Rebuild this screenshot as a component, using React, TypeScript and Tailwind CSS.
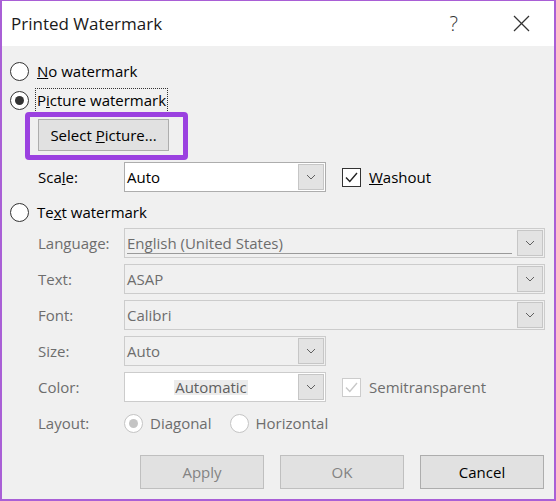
import React from "react";

// Word's "Printed Watermark" dialog, drawn as a static mock
type ComboProps = {
    width: string;
    value: string;
    disabled?: boolean;
    white?: boolean;
    centered?: boolean;
    underline?: boolean;
};

function Chevron({ color = "#606060" }: { color?: string }) {
    return (
        <svg width="10" height="6" viewBox="0 0 10 6" fill="none">
            <polyline points="1,1 5,5 9,1" stroke={color} strokeWidth="1" />
        </svg>
    );
}

function Radio({ checked = false, disabled = false }: { checked?: boolean; disabled?: boolean }) {
    return (
        <span
            className={`flex h-[19px] w-[19px] shrink-0 items-center justify-center rounded-full border bg-white ${
                disabled ? "border-[#c4c4c4]" : "border-[#333333]"
            }`}
        >
            {checked && (
                <span
                    className={`h-[9px] w-[9px] rounded-full ${disabled ? "bg-[#c4c4c4]" : "bg-[#333333]"}`}
                />
            )}
        </span>
    );
}

function Checkbox({ checked = false, disabled = false }: { checked?: boolean; disabled?: boolean }) {
    const stroke = disabled ? "#c8c8c8" : "#222222";
    return (
        <span
            className={`flex h-[19px] w-[19px] shrink-0 items-center justify-center border bg-white ${
                disabled ? "border-[#cccccc]" : "border-[#333333]"
            }`}
        >
            {checked && (
                <svg width="15" height="15" viewBox="0 0 15 15" fill="none">
                    <polyline points="2,7.5 5.8,11.5 13,3" stroke={stroke} strokeWidth="1.4" />
                </svg>
            )}
        </span>
    );
}

function Combo({ width, value, disabled, white, centered, underline }: ComboProps) {
    return (
        <div
            className={`flex h-[30px] items-stretch border ${width} ${
                white ? "bg-white" : "bg-[#f0f0f0]"
            } ${disabled ? "border-[#cccccc]" : "border-[#adadad]"}`}
        >
            <div className="relative flex flex-1 items-center">
                {centered ? (
                    <div className="flex flex-1 justify-center">
                        <span className="bg-[#ececec] px-[1px] text-[#5f5f5f]">{value}</span>
                    </div>
                ) : (
                    <span className={`pl-[2px] ${disabled ? "text-[#6d6d6d]" : "text-black"}`}>{value}</span>
                )}
                {underline && (
                    <span className="absolute bottom-[3px] left-[2px] right-[4px] h-[1px] bg-[#9a9a9a]" />
                )}
            </div>
            <div className="m-[1px] flex w-[26px] items-center justify-center border border-[#c6c6c6] bg-[#e3e3e3]">
                <Chevron />
            </div>
        </div>
    );
}

function FieldRow({ label, children }: { label: string; children: React.ReactNode }) {
    return (
        <div className="flex h-[30px] items-center pl-[36px]">
            <span className="w-[86px] text-[#6d6d6d]">{label}</span>
            {children}
        </div>
    );
}

export default function App() {
    return (
        <div className="flex h-[501px] w-[556px] flex-col border-x-2 border-b-2 border-t border-[#a95fd6] bg-[#f0f0f0] font-['Open_Sans',sans-serif] text-[15px] leading-none text-black">
            {/* title bar */}
            <div className="flex h-[45px] shrink-0 items-center bg-white pl-[9px]">
                <span className="flex-1 text-[17px] text-[#1a1a1a]">Printed Watermark</span>
                <span className="mr-[55px] text-[20px] font-light text-[#333333]">?</span>
                <svg className="mr-[24px]" width="17" height="17" viewBox="0 0 17 17">
                    <line x1="1" y1="1" x2="16" y2="16" stroke="#333333" strokeWidth="1.2" />
                    <line x1="16" y1="1" x2="1" y2="16" stroke="#333333" strokeWidth="1.2" />
                </svg>
            </div>

            <div className="flex flex-col pt-[10px]">
                <div className="flex h-[30px] items-center gap-[8px] pl-[8px]">
                    <Radio />
                    <span>
                        <u>N</u>o watermark
                    </span>
                </div>
                <div className="flex h-[28px] items-center gap-[6px] pl-[8px]">
                    <Radio checked />
                    <span className="border border-dotted border-[#333333] px-[1px] py-[4px]">
                        P<u>i</u>cture watermark
                    </span>
                </div>

                {/* highlighted picture button */}
                <div className="-mt-[2px] ml-[23px] h-[48px] w-[163px] rounded-[4px] border-[5px] border-[#9b41e0] pl-[8px] pt-[2px]">
                    <button className="flex h-[32px] w-[131px] items-center justify-center border border-[#adadad] bg-[#e1e1e1]">
                        <span>
                            Select <u>P</u>icture...
                        </span>
                    </button>
                </div>

                <div className="mt-[2px] flex h-[30px] items-center pl-[36px]">
                    <span className="w-[86px]">
                        Sca<u>l</u>e:
                    </span>
                    <Combo width="w-[202px]" value="Auto" white />
                    <div className="ml-[16px] flex items-center gap-[8px]">
                        <Checkbox checked />
                        <span>
                            <u>W</u>ashout
                        </span>
                    </div>
                </div>

                <div className="mt-[5px] flex h-[30px] items-center gap-[8px] pl-[8px]">
                    <Radio />
                    <span>
                        Te<u>x</u>t watermark
                    </span>
                </div>

                <div className="mt-[1px] flex flex-col gap-[6px]">
                    <FieldRow label="Language:">
                        <Combo width="w-[421px]" value="English (United States)" disabled underline />
                    </FieldRow>
                    <FieldRow label="Text:">
                        <Combo width="w-[421px]" value="ASAP" disabled />
                    </FieldRow>
                    <FieldRow label="Font:">
                        <Combo width="w-[421px]" value="Calibri" disabled />
                    </FieldRow>
                    <FieldRow label="Size:">
                        <Combo width="w-[202px]" value="Auto" disabled />
                    </FieldRow>
                    <FieldRow label="Color:">
                        <Combo width="w-[202px]" value="Automatic" disabled white centered />
                        <div className="ml-[16px] flex items-center gap-[8px]">
                            <Checkbox checked disabled />
                            <span className="text-[#6d6d6d]">Semitransparent</span>
                        </div>
                    </FieldRow>
                    <FieldRow label="Layout:">
                        <div className="flex items-center gap-[7px]">
                            <Radio checked disabled />
                            <span className="text-[#6d6d6d]">Diagonal</span>
                        </div>
                        <div className="ml-[18px] flex items-center gap-[7px]">
                            <Radio disabled />
                            <span className="text-[#6d6d6d]">Horizontal</span>
                        </div>
                    </FieldRow>
                </div>

                {/* dialog buttons */}
                <div className="mt-[17px] flex justify-end gap-[16px] pr-[10px]">
                    <button className="h-[34px] w-[124px] border border-[#bfbfbf] bg-[#e1e1e1] text-[#838383]">
                        Apply
                    </button>
                    <button className="h-[34px] w-[124px] border border-[#bfbfbf] bg-[#e1e1e1] text-[#838383]">
                        OK
                    </button>
                    <button className="h-[34px] w-[124px] border border-[#adadad] bg-[#e1e1e1]">Cancel</button>
                </div>
            </div>
        </div>
    );
}
